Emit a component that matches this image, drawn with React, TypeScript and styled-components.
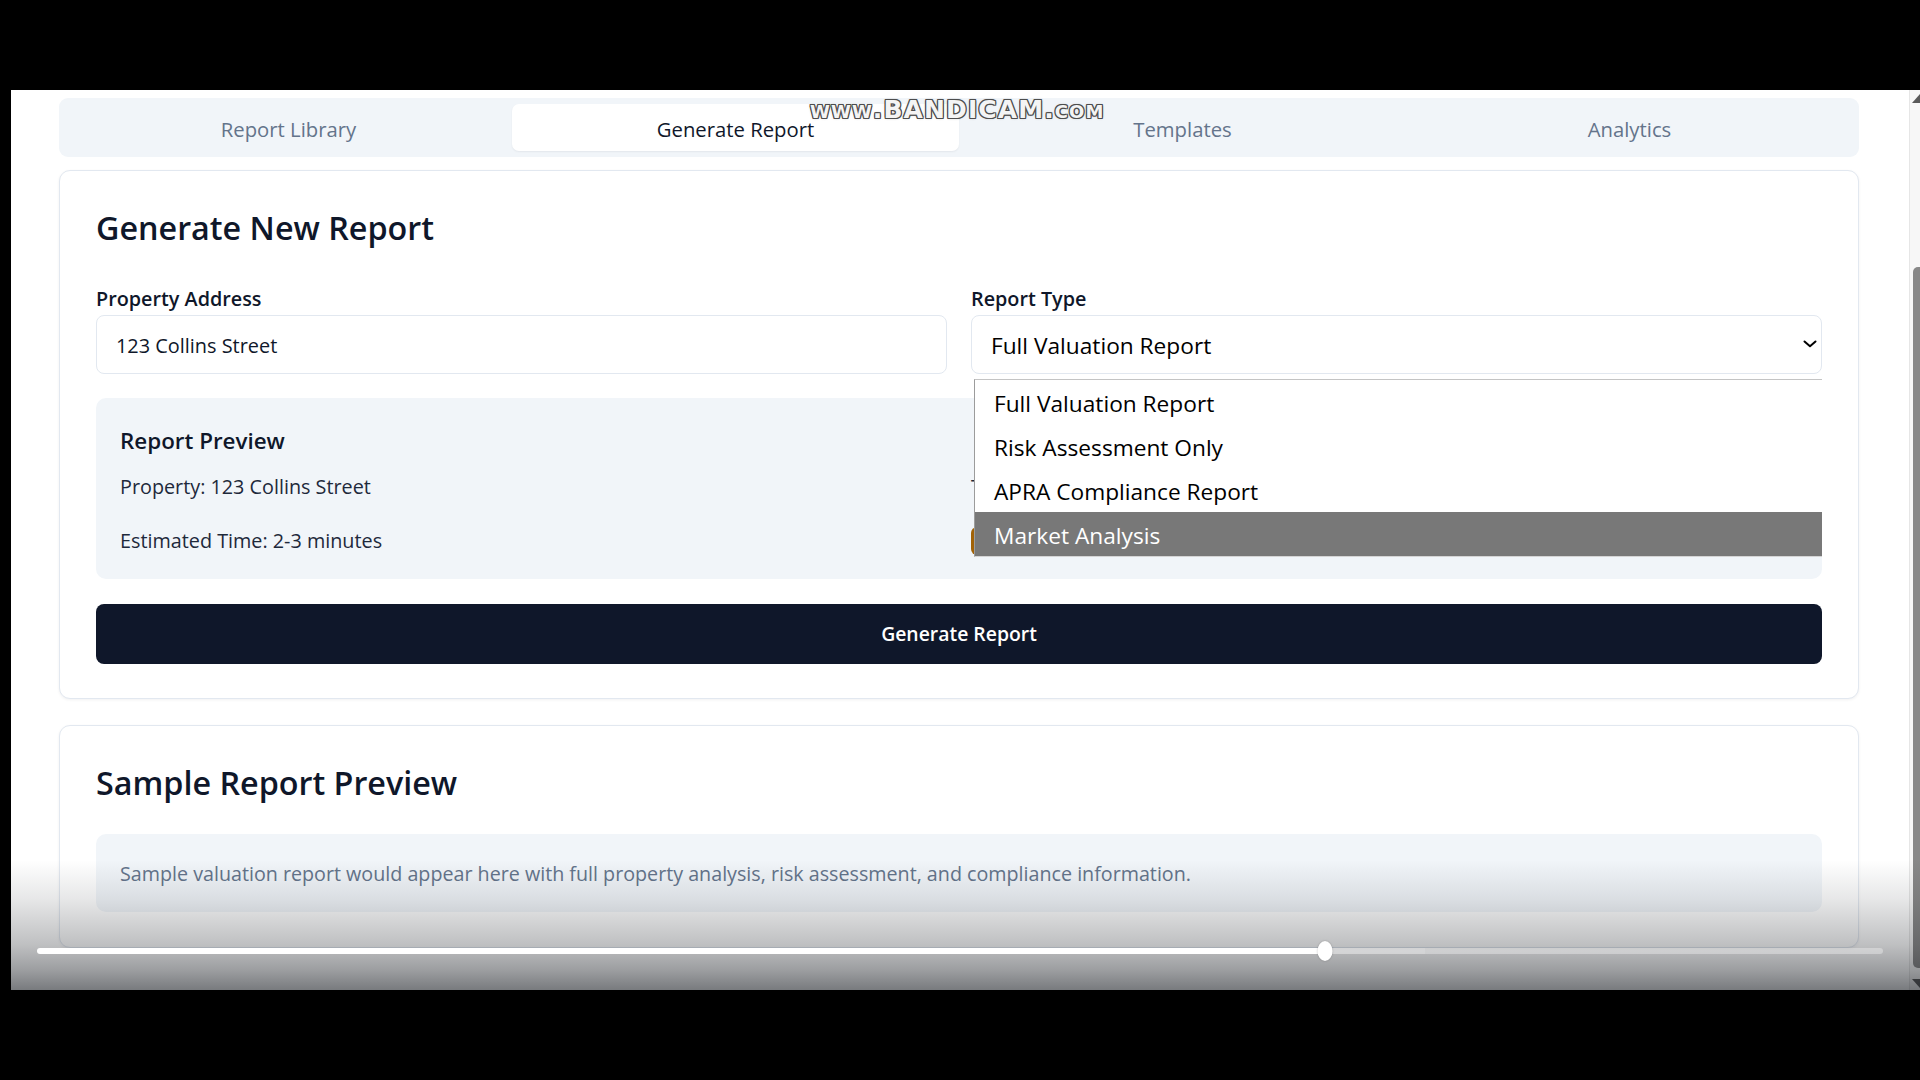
import React from "react";
import styled, { createGlobalStyle } from "styled-components";

const FONT = `"Open Sans", "Noto Sans", "Liberation Sans", Arial, sans-serif`;

const GlobalStyle = createGlobalStyle`
  html, body { margin: 0; padding: 0; background: #000; }
  body { font-family: ${FONT}; -webkit-font-smoothing: antialiased; }
  * { box-sizing: border-box; }
`;

const Screen = styled.div`
  position: relative;
  width: 1920px;
  height: 1080px;
  overflow: hidden;
  background: #000;
  display: flex;
  flex-direction: column;
`;

const TopBlack = styled.div`
  height: 90px;
  flex: none;
`;

const BottomBlack = styled.div`
  flex: 1;
`;

const VideoRow = styled.div`
  height: 900px;
  flex: none;
  display: flex;
`;

const LeftEdge = styled.div`
  width: 11px;
  flex: none;
  background: #000;
`;

const BrowserArea = styled.div`
  position: relative;
  flex: 1;
  display: flex;
  overflow: hidden;
  background: #fff;
`;

const Page = styled.main`
  flex: 1;
  min-width: 0;
  padding: 8px 0 0 48px;
  overflow: hidden;
`;

const Container = styled.div`
  width: 1800px;
  display: flex;
  flex-direction: column;
`;

const TabList = styled.div`
  height: 59px;
  padding: 6px;
  background: #f1f5f9;
  border-radius: 9px;
  display: grid;
  grid-template-columns: repeat(4, 1fr);
`;

const Tab = styled.button<{ $active?: boolean }>`
  height: 47px;
  padding: 2px 0 0;
  border: 0;
  border-radius: 7px;
  font: 500 20.3px/28px ${FONT};
  color: ${(p) => (p.$active ? "#0f172a" : "#64748b")};
  background: ${(p) => (p.$active ? "#ffffff" : "transparent")};
  box-shadow: ${(p) => (p.$active ? "0 1px 2px rgba(15,23,42,0.06)" : "none")};
`;

const Card = styled.section<{ $mt: number; $pb: number }>`
  margin-top: ${(p) => p.$mt}px;
  background: #fff;
  border: 1px solid #e2e8f0;
  border-radius: 11px;
  box-shadow: 0 1px 3px rgba(15, 23, 42, 0.06);
  padding: 36px 36px ${(p) => p.$pb}px;
`;

const CardTitle = styled.h2`
  margin: 0;
  font: 600 32.3px/40px ${FONT};
  color: #0f172a;
`;

const FieldGrid = styled.div`
  margin-top: 39px;
  display: grid;
  grid-template-columns: 1fr 1fr;
  column-gap: 24px;
`;

const Field = styled.div`
  display: flex;
  flex-direction: column;
`;

const Label = styled.label`
  font: 600 19.8px/26px ${FONT};
  color: #0f172a;
  margin-bottom: 3px;
`;

const InputBox = styled.div`
  height: 59px;
  border: 1px solid #e2e8f0;
  border-radius: 8px;
  padding: 3px 19px 0;
  display: flex;
  align-items: center;
  font: 400 19.9px/28px ${FONT};
  color: #0f172a;
  background: #fff;
`;

const SelectBox = styled.div`
  position: relative;
  height: 59px;
  border: 1px solid #e2e8f0;
  border-radius: 8px;
  padding: 3px 4px 0 19px;
  display: flex;
  align-items: center;
  justify-content: space-between;
  font: 400 22.7px/30px ${FONT};
  color: #000;
  background: #fff;
`;

const Chevron = styled.svg`
  display: block;
  margin-top: -5px;
  flex: none;
`;

const Popup = styled.ul`
  position: absolute;
  top: calc(100% + 6px);
  left: 2px;
  right: -1px;
  margin: 0;
  padding: 0;
  list-style: none;
  background: #fff;
  border-top: 1px solid #c4c4c4;
  border-left: 1px solid #9c9c9c;
  border-bottom: 1px solid #d4d4d4;
  z-index: 5;
`;

const PopupItem = styled.li<{ $hl?: boolean }>`
  height: 44px;
  padding: 3px 0 0 19px;
  display: flex;
  align-items: center;
  font: 400 22.7px/30px ${FONT};
  color: ${(p) => (p.$hl ? "#fff" : "#000")};
  background: ${(p) => (p.$hl ? "#787878" : "transparent")};
`;

const PreviewBox = styled.div`
  margin-top: 24px;
  background: #f1f5f9;
  border-radius: 10px;
  padding: 28px 24px 24px;
`;

const PreviewTitle = styled.h3`
  margin: 0 0 17px;
  font: 600 22.4px/30px ${FONT};
  color: #0f172a;
`;

const PreviewGrid = styled.div`
  display: grid;
  grid-template-columns: 1fr 1fr;
  column-gap: 24px;
  row-gap: 26px;
`;

const PreviewText = styled.p`
  margin: 0;
  font: 400 19.8px/28px ${FONT};
  color: #1e293b;
`;

const Badge = styled.span`
  display: inline-block;
  padding: 0 10px;
  border-radius: 6px;
  background: #fef3c7;
  border-left: 3px solid #a16207;
  color: #92400e;
  font: 500 17px/28px ${FONT};
`;

const GenerateButton = styled.button`
  margin-top: 25px;
  width: 100%;
  height: 60px;
  padding: 0;
  border: 0;
  border-radius: 8px;
  background: #0f172a;
  color: #fff;
  font: 600 19.4px/28px ${FONT};
`;

const SampleBox = styled.div`
  margin-top: 32px;
  background: #f1f5f9;
  border-radius: 10px;
  padding: 26px 24px 24px;
  font: 400 19.7px/28px ${FONT};
  color: #64748b;
`;

const Scrollbar = styled.div`
  width: 11px;
  flex: none;
  background: #f7f7f7;
  border-left: 1px solid #e6e6e6;
  display: flex;
  flex-direction: column;
`;

const ScrollArrow = styled.svg<{ $mt: number }>`
  display: block;
  margin-top: ${(p) => p.$mt}px;
  flex: none;
`;

const ScrollThumb = styled.div`
  margin-top: 164px;
  margin-left: 3px;
  height: 701px;
  background: #888888;
  border-radius: 5px 0 0 5px;
  flex: none;
`;

const PlayerOverlay = styled.div`
  position: absolute;
  left: 0;
  right: 0;
  bottom: 0;
  height: 130px;
  pointer-events: none;
  background: linear-gradient(
    to bottom,
    rgba(18, 22, 28, 0) 0%,
    rgba(18, 22, 28, 0.1) 30%,
    rgba(18, 22, 28, 0.27) 65%,
    rgba(18, 22, 28, 0.42) 85%,
    rgba(18, 22, 28, 0.57) 100%
  );
  display: flex;
  flex-direction: column;
  justify-content: flex-end;
  padding: 0 37px 36px 26px;
`;

const Track = styled.div`
  position: relative;
  height: 6px;
  display: flex;
  border-radius: 3px;
`;

const Played = styled.div`
  background: #ffffff;
  border-radius: 3px 0 0 3px;
`;

const Buffered = styled.div`
  background: rgba(255, 255, 255, 0.42);
`;

const Rest = styled.div`
  flex: 1;
  background: rgba(255, 255, 255, 0.34);
  border-radius: 0 3px 3px 0;
`;

const Knob = styled.div`
  position: absolute;
  top: 50%;
  width: 15px;
  height: 20px;
  border-radius: 50%;
  background: #fff;
  transform: translate(-50%, -50%);
  box-shadow: 0 0 2px rgba(0, 0, 0, 0.25);
`;

const Watermark = styled.div`
  position: absolute;
  left: 810px;
  top: 97px;
  font: 700 25px/26px "DejaVu Sans", sans-serif;
  font-variant: small-caps;
  letter-spacing: 1.1px;
  color: #f4f4f4;
  text-shadow: 1px 0 0 #4d4d4d, -1px 0 0 #4d4d4d, 0 1px 0 #4d4d4d, 0 -1px 0 #4d4d4d,
    1px 1px 0 #4d4d4d, -1px -1px 0 #4d4d4d, 1px -1px 0 #4d4d4d, -1px 1px 0 #4d4d4d,
    0 0 3px rgba(0, 0, 0, 0.35);
  pointer-events: none;
  z-index: 10;
`;

const tabs = ["Report Library", "Generate Report", "Templates", "Analytics"];
const reportTypes = ["Full Valuation Report", "Risk Assessment Only", "APRA Compliance Report", "Market Analysis"];

const progress = { played: 1288, buffered: 100, total: 1846 };

export default function App() {
  const playedPct = (progress.played / progress.total) * 100;
  const bufPct = (progress.buffered / progress.total) * 100;
  return (
    <>
      <GlobalStyle />
      <Screen>
        <TopBlack />
        <VideoRow>
          <LeftEdge />
          <BrowserArea>
            <Page>
              <Container>
                <TabList>
                  {tabs.map((t, i) => (
                    <Tab key={t} $active={i === 1}>
                      {t}
                    </Tab>
                  ))}
                </TabList>

                <Card $mt={13} $pb={34}>
                  <CardTitle>Generate New Report</CardTitle>
                  <FieldGrid>
                    <Field>
                      <Label>Property Address</Label>
                      <InputBox>123 Collins Street</InputBox>
                    </Field>
                    <Field>
                      <Label>Report Type</Label>
                      <SelectBox>
                        <span>Full Valuation Report</span>
                        <Chevron width="14" height="8" viewBox="0 0 14 8" fill="none">
                          <polyline points="1.5,1.5 7,6.3 12.5,1.5" stroke="#000" strokeWidth="2" strokeLinecap="round" strokeLinejoin="round" />
                        </Chevron>
                        <Popup>
                          {reportTypes.map((r, i) => (
                            <PopupItem key={r} $hl={i === 3}>
                              {r}
                            </PopupItem>
                          ))}
                        </Popup>
                      </SelectBox>
                    </Field>
                  </FieldGrid>

                  <PreviewBox>
                    <PreviewTitle>Report Preview</PreviewTitle>
                    <PreviewGrid>
                      <PreviewText>Property: 123 Collins Street</PreviewText>
                      <PreviewText>Type: Full Valuation Report</PreviewText>
                      <PreviewText>Estimated Time: 2-3 minutes</PreviewText>
                      <div><Badge>APRA Compliant</Badge></div>
                    </PreviewGrid>
                  </PreviewBox>

                  <GenerateButton>Generate Report</GenerateButton>
                </Card>

                <Card $mt={26} $pb={35}>
                  <CardTitle>Sample Report Preview</CardTitle>
                  <SampleBox>
                    Sample valuation report would appear here with full property analysis, risk assessment, and compliance information.
                  </SampleBox>
                </Card>
              </Container>
            </Page>

            <Scrollbar>
              <ScrollArrow $mt={3} width="10" height="10" viewBox="0 0 10 10">
                <polygon points="2,10 10,1 10,10" fill="#5a5a5a" />
              </ScrollArrow>
              <ScrollThumb />
              <ScrollArrow $mt={11} width="10" height="10" viewBox="0 0 10 10">
                <polygon points="2,0 10,0 10,9" fill="#5a5a5a" />
              </ScrollArrow>
            </Scrollbar>

            <PlayerOverlay>
              <Track>
                <Played style={{ width: `${playedPct}%` }} />
                <Buffered style={{ width: `${bufPct}%` }} />
                <Rest />
                <Knob style={{ left: `${playedPct}%` }} />
              </Track>
            </PlayerOverlay>
          </BrowserArea>
        </VideoRow>
        <BottomBlack />
        <Watermark>www.BANDICAM.com</Watermark>
      </Screen>
    </>
  );
}
